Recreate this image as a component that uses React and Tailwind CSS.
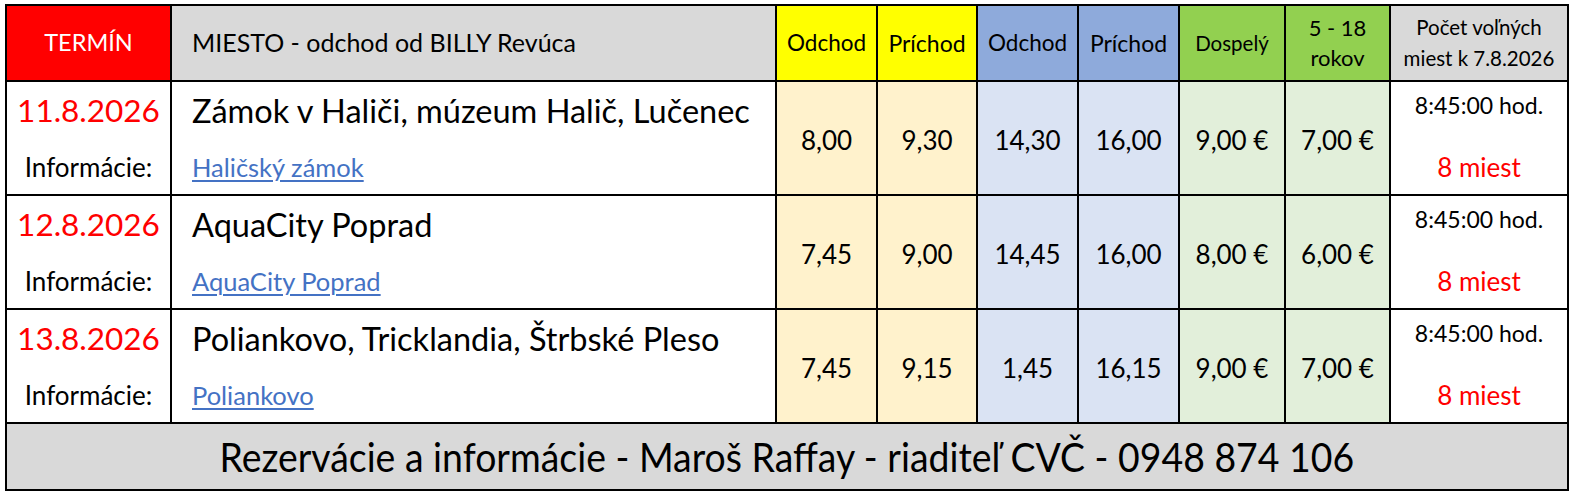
import React from "react";

const rows = [
  {
    date: "11.8.2026",
    place: "Zámok v Haliči, múzeum Halič, Lučenec",
    link: "Haličský zámok",
    times: ["8,00", "9,30", "14,30", "16,00"],
    adult: "9,00 €",
    child: "7,00 €",
  },
  {
    date: "12.8.2026",
    place: "AquaCity Poprad",
    link: "AquaCity Poprad",
    times: ["7,45", "9,00", "14,45", "16,00"],
    adult: "8,00 €",
    child: "6,00 €",
  },
  {
    date: "13.8.2026",
    place: "Poliankovo, Tricklandia, Štrbské Pleso",
    link: "Poliankovo",
    times: ["7,45", "9,15", "1,45", "16,15"],
    adult: "9,00 €",
    child: "7,00 €",
  },
];

const timeBg = ["bg-[#fff2cc]", "bg-[#fff2cc]", "bg-[#dae3f3]", "bg-[#dae3f3]"];

function Num({ children, className }) {
  return (
    <div className={`flex items-center justify-center text-[26px] leading-none pt-[4px] ${className}`}>
      {children}
    </div>
  );
}

export default function App() {
  return (
    <div className="min-h-screen bg-white text-black" style={{ fontFamily: "Lato, 'Noto Sans', sans-serif" }}>
      <div className="ml-[5px] pt-[4px] inline-block">
        <div className="grid grid-cols-[163px_603px_99px_98px_99px_99px_104px_103px_176px] grid-rows-[74px_112px_112px_112px_65px] gap-[2px] bg-black p-[2px]">
          {/* header */}
          <div className="bg-[#ff0000] text-white flex items-center justify-center text-[23.5px]">TERMÍN</div>
          <div className="bg-[#d9d9d9] flex items-center pl-[20px] text-[25px]">MIESTO - odchod od BILLY Revúca</div>
          <div className="bg-[#ffff00] flex items-center justify-center text-[22.5px]">Odchod</div>
          <div className="bg-[#ffff00] flex items-center justify-center text-[23px]">Príchod</div>
          <div className="bg-[#8eaadb] flex items-center justify-center text-[22.5px]">Odchod</div>
          <div className="bg-[#8eaadb] flex items-center justify-center text-[23px]">Príchod</div>
          <div className="bg-[#92d050] flex items-center justify-center text-[20.5px]">Dospelý</div>
          <div className="bg-[#92d050] flex flex-col items-center justify-center text-[22px] leading-[30px]">
            <span>5 - 18</span>
            <span>rokov</span>
          </div>
          <div className="bg-[#d9d9d9] flex flex-col items-center justify-center text-[20.5px] leading-[31px]">
            <span>Počet voľných</span>
            <span>miest k 7.8.2026</span>
          </div>

          {rows.map((r) => (
            <React.Fragment key={r.date}>
              <div className="bg-white flex flex-col items-center">
                <div className="h-[58px] flex items-center text-[31.5px] text-[#ff0000]">{r.date}</div>
                <div className="h-[54px] flex items-center text-[26px]">Informácie:</div>
              </div>
              <div className="bg-white flex flex-col pl-[20px]">
                <div className="h-[58px] flex items-center text-[32.5px]">{r.place}</div>
                <div className="h-[54px] flex items-center text-[25.5px]">
                  <a href="#" className="text-[#4472c4] underline decoration-[1.5px] underline-offset-[3px]">
                    {r.link}
                  </a>
                </div>
              </div>
              {r.times.map((t, i) => (
                <Num key={i} className={timeBg[i]}>
                  {t}
                </Num>
              ))}
              <Num className="bg-[#e2efda] text-[24px]">{r.adult}</Num>
              <Num className="bg-[#e2efda] text-[24px]">{r.child}</Num>
              <div className="bg-white flex flex-col items-center">
                <div className="h-[46px] flex items-center text-[23px]">8:45:00 hod.</div>
                <div className="mt-[12px] h-[54px] flex items-center text-[26px] text-[#ff0000]">8 miest</div>
              </div>
            </React.Fragment>
          ))}

          <div className="col-span-9 bg-[#d9d9d9] flex items-center justify-center overflow-hidden">
            <span className="inline-block text-[40px] leading-none scale-x-[0.935] whitespace-nowrap">
              Rezervácie a informácie - Maroš Raffay - riaditeľ CVČ - 0948 874 106
            </span>
          </div>
        </div>
      </div>
    </div>
  );
}
